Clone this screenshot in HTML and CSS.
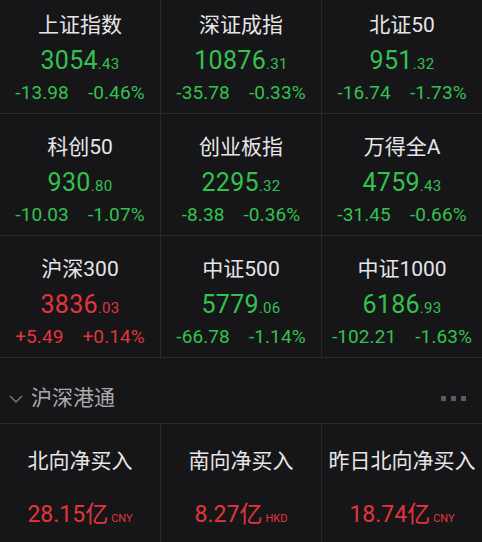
FILE: index.html
```html
<!DOCTYPE html>
<html lang="zh-CN">
<head>
<meta charset="utf-8">
<title>行情</title>
<link rel="stylesheet" href="styles.css">
</head>
<body>
<div class="page">
  <div class="grid">
    <div class="cell">
      <div class="name">上证指数</div>
      <div class="price down">3054<span class="dec">.43</span></div>
      <div class="chg down"><span>-13.98</span><span>-0.46%</span></div>
    </div>
    <div class="cell">
      <div class="name">深证成指</div>
      <div class="price down">10876<span class="dec">.31</span></div>
      <div class="chg down"><span>-35.78</span><span>-0.33%</span></div>
    </div>
    <div class="cell">
      <div class="name">北证50</div>
      <div class="price down">951<span class="dec">.32</span></div>
      <div class="chg down"><span>-16.74</span><span>-1.73%</span></div>
    </div>
    <div class="cell">
      <div class="name">科创50</div>
      <div class="price down">930<span class="dec">.80</span></div>
      <div class="chg down"><span>-10.03</span><span>-1.07%</span></div>
    </div>
    <div class="cell">
      <div class="name">创业板指</div>
      <div class="price down">2295<span class="dec">.32</span></div>
      <div class="chg down"><span>-8.38</span><span>-0.36%</span></div>
    </div>
    <div class="cell">
      <div class="name">万得全A</div>
      <div class="price down">4759<span class="dec">.43</span></div>
      <div class="chg down"><span>-31.45</span><span>-0.66%</span></div>
    </div>
    <div class="cell">
      <div class="name">沪深300</div>
      <div class="price up">3836<span class="dec">.03</span></div>
      <div class="chg up"><span>+5.49</span><span>+0.14%</span></div>
    </div>
    <div class="cell">
      <div class="name">中证500</div>
      <div class="price down">5779<span class="dec">.06</span></div>
      <div class="chg down"><span>-66.78</span><span>-1.14%</span></div>
    </div>
    <div class="cell">
      <div class="name">中证1000</div>
      <div class="price down">6186<span class="dec">.93</span></div>
      <div class="chg down"><span>-102.21</span><span>-1.63%</span></div>
    </div>
  </div>

  <div class="section">
    <div class="section-left">
      <svg class="chevron" width="14" height="8" viewBox="0 0 14 8"><polyline points="1,1 7,7 13,1" fill="none" stroke="#7a7a7e" stroke-width="1.4"/></svg>
      <span class="section-title">沪深港通</span>
    </div>
    <div class="dots"><i></i><i></i><i></i></div>
  </div>

  <div class="flows">
    <div class="fcell">
      <div class="name">北向净买入</div>
      <div class="fval">28.15亿<span class="cur">CNY</span></div>
    </div>
    <div class="fcell">
      <div class="name">南向净买入</div>
      <div class="fval">8.27亿<span class="cur">HKD</span></div>
    </div>
    <div class="fcell">
      <div class="name">昨日北向净买入</div>
      <div class="fval">18.74亿<span class="cur">CNY</span></div>
    </div>
  </div>
</div>
</body>
</html>
```
FILE: styles.css
```css
* { box-sizing: border-box; }
html, body {
  margin: 0;
  padding: 0;
  background: #161618;
  overflow: hidden;
}
body {
  width: 482px;
  height: 542px;
  font-family: Roboto, "Noto Sans CJK SC", sans-serif;
  color: #e4e4e6;
}
.page {
  margin-top: -8px;
}
.grid {
  display: grid;
  grid-template-columns: 160px 160px 160px;
  grid-auto-rows: 121px;
  gap: 1px;
  background: #2a2a2d;
  border-bottom: 1px solid #2a2a2d;
}
.cell {
  background: #161618;
  display: flex;
  flex-direction: column;
  align-items: center;
  padding-top: 19px;
}
.name {
  font-size: 21px;
  line-height: 28px;
  color: #e6e6e8;
  white-space: nowrap;
}
.price {
  margin-top: 5px;
  font-size: 25px;
  line-height: 34px;
  letter-spacing: 0.3px;
}
.dec {
  font-size: 15px;
  letter-spacing: 0.3px;
}
.chg {
  font-size: 19px;
  line-height: 24px;
  display: flex;
  gap: 19px;
  letter-spacing: 0.1px;
  white-space: nowrap;
}
.down { color: #33c14f; }
.up { color: #e2353b; }

.section {
  height: 66px;
  display: flex;
  align-items: flex-start;
  justify-content: space-between;
  padding: 26px 16px 0 9px;
  border-bottom: 1px solid #2a2a2d;
}
.section-left {
  display: flex;
  align-items: center;
  gap: 8px;
}
.chevron { display: block; margin-top: 2px; }
.section-title {
  font-size: 21px;
  line-height: 28px;
  color: #a9a9ad;
}
.dots {
  display: flex;
  gap: 5px;
  margin-top: 12px;
}
.dots i {
  display: block;
  width: 5px;
  height: 5px;
  background: #5c5c60;
}

.flows {
  display: grid;
  grid-template-columns: 160px 160px 160px;
  gap: 1px;
  background: #2a2a2d;
  height: 127px;
}
.fcell {
  background: #161618;
  display: flex;
  flex-direction: column;
  align-items: center;
  padding-top: 23px;
}
.fval {
  margin-top: 25px;
  font-size: 23px;
  line-height: 30px;
  color: #e2353b;
  white-space: nowrap;
}
.cur {
  font-size: 11px;
  margin-left: 3px;
}
```
